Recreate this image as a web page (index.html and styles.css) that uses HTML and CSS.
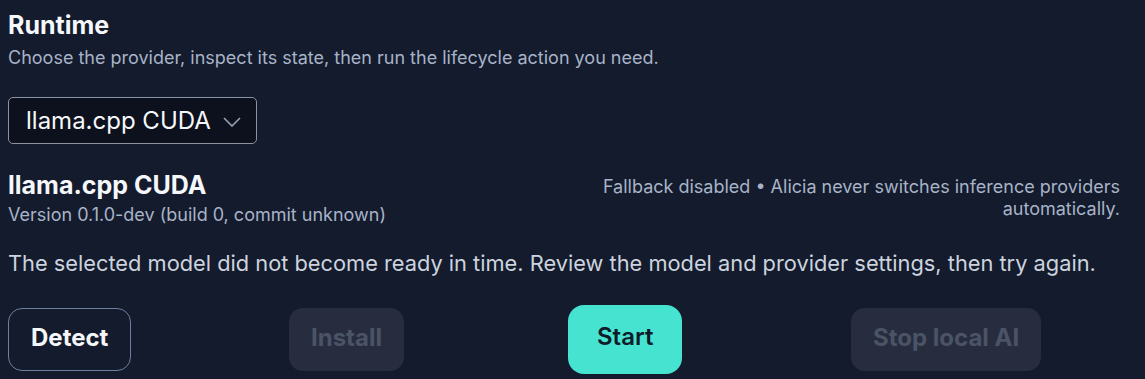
FILE: index.html
```html
<!DOCTYPE html>
<html>

<head>
    <title>Runtime</title>
    <link rel="stylesheet" href="styles.css">
</head>

<body>
    <div class="runtime">
        <h2 class="title-page">Runtime</h2>
        <p class="subtitle">Choose the provider, inspect its state, then run the lifecycle action you need.</p>

        <div class="select-box">
            <span>llama.cpp CUDA</span>
            <svg class="chevron" width="18" height="10" viewBox="0 0 18 10">
                <path d="M1 1 L9 9 L17 1" fill="none" stroke="#9aa3b5" stroke-width="1.6" />
            </svg>
        </div>

        <div class="provider">
            <div>
                <h3 class="provider-name">llama.cpp CUDA</h3>
                <p class="version">Version 0.1.0-dev (build 0, commit unknown)</p>
            </div>
            <p class="fallback">Fallback disabled &bull; Alicia never switches inference providers automatically.</p>
        </div>

        <p class="message">The selected model did not become ready in time. Review the model and provider settings, then try again.</p>

        <div class="actions">
            <button class="btn btn-outline">Detect</button>
            <button class="btn btn-disabled" disabled>Install</button>
            <button class="btn btn-primary">Start</button>
            <button class="btn btn-disabled" disabled>Stop local AI</button>
        </div>
    </div>
</body>

</html>
```

FILE: styles.css
```css
body {
    margin: 0;
    padding: 0;
    background-color: #131b2d;
    font-family: Inter, "Noto Sans", sans-serif;
    color: #f5f7fa;
}

.runtime {
    padding: 10px 25px 0 8px;
}

.title-page {
    margin: 0;
    font-size: 25px;
    font-weight: 700;
    line-height: 30px;
}

.subtitle {
    margin: 6px 0 0 0;
    font-size: 18px;
    line-height: 24px;
    color: #a8b3c7;
}

.select-box {
    margin-top: 27px;
    width: 249px;
    height: 47px;
    box-sizing: border-box;
    border: 1.5px solid #8b93a3;
    border-radius: 5px;
    background-color: #0c111d;
    display: flex;
    align-items: center;
    justify-content: space-between;
    padding: 0 15px 0 17px;
    font-size: 24px;
}

.chevron {
    margin-top: 2px;
}

.provider {
    display: flex;
    justify-content: space-between;
    align-items: flex-start;
    margin-top: 26px;
}

.provider-name {
    margin: 0;
    font-size: 25px;
    font-weight: 700;
    line-height: 30px;
}

.version {
    margin: 3px 0 0 0;
    font-size: 18px;
    line-height: 24px;
    color: #a8b3c7;
}

.fallback {
    margin: 6px 0 0 0;
    max-width: 520px;
    text-align: right;
    font-size: 18px;
    line-height: 22px;
    color: #a8b3c7;
}

.message {
    margin: 22px 0 0 0;
    font-size: 21.8px;
    line-height: 28px;
    color: #ccd3de;
}

.actions {
    display: grid;
    grid-template-columns: repeat(4, 1fr);
    gap: 12px;
    align-items: center;
    margin-top: 28px;
}

.btn {
    justify-self: start;
    height: 63px;
    padding: 0 21px 5px 21px;
    border-radius: 14px;
    font-family: Inter, "Noto Sans", sans-serif;
    font-size: 24px;
    font-weight: 700;
    border: 1.5px solid transparent;
    cursor: pointer;
}

.btn-outline {
    padding: 0 22px 5px 22px;
    background-color: transparent;
    border-color: #6e7fa0;
    color: #f5f7fa;
}

.btn-disabled {
    background-color: #272d3f;
    color: #4b5366;
    cursor: default;
}

.btn-primary {
    height: 69px;
    padding: 0 28px 6px 28px;
    margin-left: -2px;
    border-radius: 16px;
    background-color: #45e3d0;
    color: #0d1b2a;
    font-weight: 600;
}
```
